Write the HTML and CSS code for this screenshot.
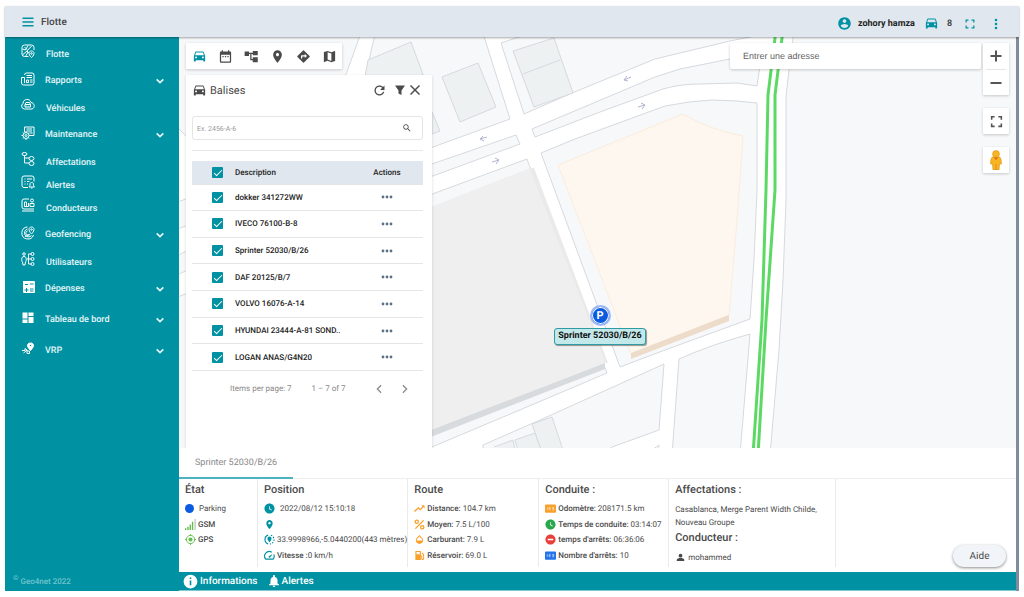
FILE: index.html
```html
<!DOCTYPE html>
<html lang="fr">
<head>
    <meta charset="UTF-8">
    <meta name="viewport" content="width=device-width, initial-scale=1.0">
    <title>Flotte</title>
    <link rel="stylesheet" href="styles.css">
</head>
<body>

    <!-- Shared icons -->
    <svg class="sprite" aria-hidden="true">
        <symbol id="i-menu" viewBox="0 0 24 24"><path d="M1 3h22v3H1zm0 7.500h22v3H1zM1 18h22v3H1z"/></symbol>
        <symbol id="i-car" viewBox="0 0 24 24"><path d="M18.920 5.010C18.720 4.420 18.160 4 17.500 4h-11c-.66 0-1.210.42-1.420 1.010L3 11v8c0 .55.45 1 1 1h1c.55 0 1-.45 1-1v-1h12v1c0 .55.45 1 1 1h1c.55 0 1-.45 1-1v-8l-2.080-5.990zM6.500 15c-.83 0-1.500-.67-1.500-1.500S5.670 12 6.500 12s1.500.67 1.500 1.500S7.330 15 6.500 15zm11 0c-.83 0-1.500-.67-1.500-1.500s.67-1.500 1.500-1.500 1.500.67 1.500 1.500-.67 1.500-1.500 1.500zM5 10l1.500-4.500h11L19 10H5z"/></symbol>
        <symbol id="i-event" viewBox="0 0 24 24"><path d="M19 4h-1V2h-2v2H8V2H6v2H5c-1.100 0-2 .9-2 2v14c0 1.100.9 2 2 2h14c1.100 0 2-.9 2-2V6c0-1.100-.9-2-2-2zm0 16H5V9h14v11zM7 11h2v2H7zm4 0h2v2h-2zm4 0h2v2h-2z"/></symbol>
        <symbol id="i-tree" viewBox="0 0 24 24"><path d="M1 4h7v2h6V3h8v7h-8V8h-2v8h2v-3h8v8h-8v-3h-4V8H8v3H1z"/></symbol>
        <symbol id="i-place" viewBox="0 0 24 24"><path d="M12 2C8.130 2 5 5.130 5 9c0 5.250 7 13 7 13s7-7.750 7-13c0-3.870-3.130-7-7-7zm0 9.500c-1.380 0-2.500-1.120-2.500-2.500s1.120-2.500 2.500-2.500 2.500 1.120 2.500 2.500-1.120 2.500-2.500 2.500z"/></symbol>
        <symbol id="i-directions" viewBox="0 0 24 24"><path d="M21.710 11.290l-9-9a.996.996 0 0 0-1.410 0l-9 9a.996.996 0 0 0 0 1.410l9 9c.39.39 1.020.39 1.410 0l9-9a.996.996 0 0 0 0-1.410zM14 14.500V12h-4v3H8v-4c0-.55.45-1 1-1h5V7.500l3.500 3.500-3.500 3.500z"/></symbol>
        <symbol id="i-map" viewBox="0 0 24 24"><path d="M20.500 3l-.16.030L15 5.100 9 3 3.360 4.900c-.21.070-.36.250-.36.480V20.500c0 .28.220.5.500.5l.16-.030L9 18.900l6 2.100 5.640-1.900c.21-.070.360-.250.360-.480V3.500c0-.28-.22-.5-.5-.5zM15 19l-6-2.110V5l6 2.110V19z"/></symbol>
        <symbol id="i-refresh" viewBox="0 0 24 24"><path d="M17.650 6.350C16.200 4.900 14.210 4 12 4c-4.420 0-7.990 3.580-7.990 8s3.570 8 7.990 8c3.730 0 6.840-2.550 7.730-6h-2.080c-.82 2.330-3.040 4-5.650 4-3.310 0-6-2.690-6-6s2.690-6 6-6c1.660 0 3.140.69 4.220 1.780L13 11h7V4l-2.350 2.350z"/></symbol>
        <symbol id="i-filter" viewBox="0 0 24 24"><path d="M2 3h20l-7 10v9l-6-3v-6z"/></symbol>
        <symbol id="i-close" viewBox="0 0 24 24"><path d="M22 4L20 2l-8 8-8-8-2 2 8 8-8 8 2 2 8-8 8 8 2-2-8-8z"/></symbol>
        <symbol id="i-search" viewBox="0 0 24 24"><path d="M15.500 14h-.79l-.28-.27C15.410 12.590 16 11.110 16 9.500 16 5.910 13.090 3 9.500 3S3 5.910 3 9.500 5.910 16 9.500 16c1.610 0 3.090-.59 4.230-1.570l.27.28v.79l5 4.990L20.490 19l-4.990-5zm-6 0C7.010 14 5 11.990 5 9.500S7.010 5 9.500 5 14 7.010 14 9.500 11.990 14 9.500 14z"/></symbol>
        <symbol id="i-account" viewBox="0 0 24 24"><path d="M12 2C6.480 2 2 6.480 2 12s4.480 10 10 10 10-4.480 10-10S17.520 2 12 2zm0 3c1.660 0 3 1.340 3 3s-1.340 3-3 3-3-1.340-3-3 1.340-3 3-3zm0 14.200c-2.500 0-4.710-1.280-6-3.220.03-1.990 4-3.080 6-3.080 1.990 0 5.970 1.090 6 3.080-1.290 1.940-3.500 3.220-6 3.220z"/></symbol>
        <symbol id="i-full" viewBox="0 0 24 24"><path d="M3 3h6v2.500H5.500V9H3zm12 0h6v6h-2.500V5.500H15zM3 15h2.500v3.500H9V21H3zm15.500 0H21v6h-6v-2.500h3.500z"/></symbol>
        <symbol id="i-more" viewBox="0 0 24 24"><circle cx="12" cy="4" r="2.600"/><circle cx="12" cy="12" r="2.600"/><circle cx="12" cy="20" r="2.600"/></symbol>
        <symbol id="i-dots" viewBox="0 0 24 24"><circle cx="4" cy="12" r="2.800"/><circle cx="12" cy="12" r="2.800"/><circle cx="20" cy="12" r="2.800"/></symbol>
        <symbol id="i-down" viewBox="0 0 24 24"><path d="M4 8l8 8 8-8" fill="none" stroke="currentColor" stroke-width="4"/></symbol>
        <symbol id="i-prev" viewBox="0 0 24 24"><path d="M17 3l-9 9 9 9" fill="none" stroke="currentColor" stroke-width="3"/></symbol>
        <symbol id="i-next" viewBox="0 0 24 24"><path d="M7 3l9 9-9 9" fill="none" stroke="currentColor" stroke-width="3"/></symbol>
        <symbol id="i-clock" viewBox="0 0 24 24"><path d="M12 1C6 1 1 6 1 12s5 11 11 11 11-5 11-11S18 1 12 1zm4.200 15.200L11 13V7h1.500v5.200l4.500 2.700z"/></symbol>
        <symbol id="i-target" viewBox="0 0 24 24"><circle cx="12" cy="12" r="9" fill="none" stroke="currentColor" stroke-width="2"/><circle cx="12" cy="12" r="4.500"/><path d="M11 0h2v4h-2zm0 20h2v4h-2zM0 11h4v2H0zm20 0h4v2h-4z"/></symbol>
        <symbol id="i-coords" viewBox="0 0 24 24"><path d="M9 2.500a10 10 0 0 0 0 19M15 2.500l3 1.500M20 6l1.500 3M22 12l-.5 3M20 18l-2 2M15 21.500h-2" fill="none" stroke="currentColor" stroke-width="2.500"/><path d="M12 5.500c-2.500 0-4.500 2-4.500 4.400 0 3.300 4.500 8.300 4.500 8.300s4.500-5 4.500-8.300c0-2.400-2-4.400-4.500-4.400z"/></symbol>
        <symbol id="i-speed" viewBox="0 0 24 24"><path d="M17 5A10 10 0 0 0 4 20h16a10 10 0 0 0 1.500-10" fill="none" stroke="currentColor" stroke-width="2.500"/><path d="M10.600 16.400a2 2 0 0 1 0-2.800L19 8l-5.600 8.400a2 2 0 0 1-2.800 0z"/></symbol>
        <symbol id="i-trend" viewBox="0 0 24 24"><path d="M16 5l2.500 2.500-5 5-4-4L0 17.500 2 19.500l7.500-7 4 4 7-7L23 12V5z"/></symbol>
        <symbol id="i-percent" viewBox="0 0 24 24"><g fill="none" stroke="currentColor" stroke-width="3"><circle cx="6" cy="6" r="3.500"/><circle cx="18" cy="18" r="3.500"/><path d="M3 21L21 3"/></g></symbol>
        <symbol id="i-drop" viewBox="0 0 24 24"><path d="M17.660 8L12 2.350 6.340 8C4.780 9.560 4 11.640 4 13.640s.78 4.110 2.340 5.670 3.610 2.350 5.660 2.350 4.100-.79 5.660-2.350S20 15.640 20 13.640 19.220 9.560 17.660 8zM6 14c.01-2 .62-3.270 1.760-4.400L12 5.270l4.240 4.380C17.380 10.770 17.990 12 18 14H6z"/></symbol>
        <symbol id="i-gas" viewBox="0 0 24 24"><path d="M3 2h12v10h1c1 0 2 1 2 2v4.500c0 1.300 2 1.300 2 0V11l-3-3V5l5 4v10c0 4-6 4-6 0v-5h-1v8H3zm2.500 2.500v5h7v-5z"/></symbol>
        <symbol id="i-counter" viewBox="0 0 24 24"><rect x="0" y="3" width="24" height="18" rx="2"/><path d="M5 9v6M8.500 9.500h3v2.500h-3v2.500h3.500M15.500 9.500h3.500v5.500h-3.500M16 12h3" fill="none" stroke="#fff" stroke-width="1.300" stroke-opacity=".8"/></symbol>
        <symbol id="i-stop" viewBox="0 0 24 24"><path d="M12 1C6 1 1 6 1 12s5 11 11 11 11-5 11-11S18 1 12 1zm6 12.500H6v-3h12z"/></symbol>
        <symbol id="i-person" viewBox="0 0 24 24"><circle cx="12" cy="7" r="5"/><path d="M2 21v-3c0-3 6-4.500 10-4.500S22 15 22 18v3z"/></symbol>
        <symbol id="i-info" viewBox="0 0 24 24"><path d="M12 1C6 1 1 6 1 12s5 11 11 11 11-5 11-11S18 1 12 1zm1.300 17h-2.600v-7.500h2.600zm0-10h-2.600V5.500h2.600z"/></symbol>
        <symbol id="i-bell" viewBox="0 0 24 24"><path d="M12 24c1.400 0 2.500-1 2.500-2.500h-5C9.500 23 10.600 24 12 24zm7-7v-6c0-3.500-1.800-6.500-5-7.200V2.500C14 1 13 0 12 0s-2 1-2 2.500v1.300C6.800 4.500 5 7.500 5 11v6l-3 2v1.500h20V19z"/></symbol>
        <symbol id="i-gsm" viewBox="0 0 24 24"><path d="M0 20h3v4H0zm5-3h3v7H5zm5-5h3v12h-3zm5-6h3v18h-3z"/><path d="M21 0h2v24h-2z" fill="#aaa"/></symbol>
    </svg>

    <div class="app">
        <header class="topbar">
            <button class="icon-btn" type="button" aria-label="Menu"><svg class="icon"><use href="#i-menu"/></svg></button>
            <h1>Flotte</h1>
            <div class="topbar-user">
                <svg class="icon icon-lg"><use href="#i-account"/></svg>
                <span class="user-name">zohory hamza</span>
                <svg class="icon icon-lg"><use href="#i-car"/></svg>
                <span class="car-count">8</span>
                <button class="icon-btn" type="button" aria-label="Plein écran"><svg class="icon"><use href="#i-full"/></svg></button>
                <button class="icon-btn" type="button" aria-label="Plus"><svg class="icon"><use href="#i-more"/></svg></button>
            </div>
        </header>

        <div class="main">
            <nav class="sidebar">
                <a class="nav-item" href="#">
                    <svg class="nav-icon" viewBox="0 0 28 28"><path d="M15 25H7a5 5 0 0 1-5-5V7a5 5 0 0 1 5-5h14a5 5 0 0 1 5 5v5M3 10l6 2 5-9M4 21l8-7 9-10M12 14l4 4M7 6l5 5M9 25l5-9"/><path d="M21 14c-3 0-5 2-5 5 0 4 5 8 5 8s5-4 5-8c0-3-2-5-5-5z"/><circle cx="21" cy="19" r="1.500"/></svg>
                    <span>Flotte</span>
                </a>
                <a class="nav-group" href="#">
                    <svg class="nav-icon" viewBox="0 0 28 28"><path d="M7 6a4 4 0 0 1 4-4h11a4 4 0 0 1 4 4v16a4 4 0 0 1-4 4H5a4 4 0 0 1-4-4V11h6v11M11 7h11M11 11h11M11 16h4v5h-4zM18 16h5M18 20h5"/></svg>
                    <span>Rapports</span><svg class="chevron"><use href="#i-down"/></svg>
                </a>
                <a class="nav-item" href="#">
                    <svg class="nav-icon" viewBox="0 0 28 28"><path d="M7 22a6 6 0 0 1-3-11C4 1 18 0 20 9c7 0 9 11 2 13zM8 13l2-4h7l2 4v5H8zM8 13h11M11 16h1M15 16h1"/></svg>
                    <span>Véhicules</span>
                </a>
                <a class="nav-group" href="#">
                    <svg class="nav-icon" viewBox="0 0 28 28"><path d="M7 12V2h19v17h-8M11 6h11M11 10h11M17 14h6"/><circle cx="10" cy="19" r="2"/><path d="M10 10v3M10 25v3M1 19h3M16 19h3M4 13l2 2M16 13l-2 2M4 25l2-2M16 25l-2-2"/><circle cx="10" cy="19" r="6"/></svg>
                    <span>Maintenance</span><svg class="chevron"><use href="#i-down"/></svg>
                </a>
                <a class="nav-item" href="#">
                    <svg class="nav-icon" viewBox="0 0 28 28"><ellipse cx="7" cy="4" rx="5" ry="3"/><ellipse cx="21" cy="13" rx="5" ry="4"/><ellipse cx="21" cy="23" rx="5" ry="4"/><path d="M7 7v15h9M7 12h9"/></svg>
                    <span>Affectations</span>
                </a>
                <a class="nav-item" href="#">
                    <svg class="nav-icon" viewBox="0 0 28 28"><path d="M14 25H6a4 4 0 0 1-4-4V6a4 4 0 0 1 4-4h16a4 4 0 0 1 4 4v7M7 8h2M12 8h10M7 13h2M12 13h5M7 18h2M12 18h2"/><path d="M16 24h11l-2-3v-3c0-4-7-4-7 0v3zM20 26h3"/></svg>
                    <span>Alertes</span>
                </a>
                <a class="nav-item" href="#">
                    <svg class="nav-icon" viewBox="0 0 28 28"><path d="M16 2H6a4 4 0 0 0-4 4v12a4 4 0 0 0 4 4h20M2 26h24M7 8v9M11 8v9M15 10v7M7 8h4M7 17h8"/><circle cx="22" cy="5" r="3"/><path d="M18 11h8v6h-8z"/></svg>
                    <span>Conducteurs</span>
                </a>
                <a class="nav-group" href="#">
                    <svg class="nav-icon" viewBox="0 0 28 28"><path d="M13 2a12 12 0 1 0 12 16M13 6a8 8 0 1 0 8 13M13 10a4 4 0 1 0 4 6M8 21l10-4"/><path d="M21 2c-3 0-5 2-5 5 0 4 5 9 5 9s5-5 5-9c0-3-2-5-5-5z"/><circle cx="21" cy="7" r="1.500"/></svg>
                    <span>Geofencing</span><svg class="chevron"><use href="#i-down"/></svg>
                </a>
                <a class="nav-item" href="#">
                    <svg class="nav-icon" viewBox="0 0 28 28"><circle cx="6" cy="4" r="2.500"/><path d="M6 9c-6 0-5 9-3 11l1 6h4l1-6c2-2 3-11-3-11zM20 4h-5v20h5M12 14h8"/><circle cx="23" cy="4" r="3"/><circle cx="23" cy="14" r="3"/><circle cx="23" cy="24" r="3"/></svg>
                    <span>Utilisateurs</span>
                </a>
                <a class="nav-group" href="#">
                    <svg class="nav-icon solid" viewBox="0 0 28 28"><path fill-rule="evenodd" d="M4 2h22a2 2 0 0 1 2 2v20a2 2 0 0 1-2 2H6a2 2 0 0 1-2-2V4zm4 6v2h6V8zm10-1v2h7V7zm0 10v2h7v-2zm0 4v2h7v-2zM10 16v3H7v2h3v3h2v-3h3v-2h-3v-3z"/></svg>
                    <span>Dépenses</span><svg class="chevron"><use href="#i-down"/></svg>
                </a>
                <a class="nav-group" href="#">
                    <svg class="nav-icon solid" viewBox="0 0 28 28"><path d="M3 3h10v12H3zm0 14h10v7H3zM15 3h10v7H15zm0 9h10v12H15z"/></svg>
                    <span>Tableau de bord</span><svg class="chevron"><use href="#i-down"/></svg>
                </a>
                <a class="nav-group" href="#">
                    <svg class="nav-icon" viewBox="0 0 28 28"><path d="M2 17h6v-4l4 3v7h5v-5h-5M5 22l7-6"/><path fill="#fff" fill-rule="evenodd" d="M19 2c-4 0-6 2-6 5 0 4 6 10 6 10s6-6 6-10c0-3-2-5-6-5zm0 3a2 2 0 1 1 0 4 2 2 0 0 1 0-4z"/></svg>
                    <span>VRP</span><svg class="chevron"><use href="#i-down"/></svg>
                </a>
                <p class="copyright"><sup>©</sup> Geo4net 2022</p>
            </nav>

            <div class="content">
                <section class="map">
                    <svg class="map-canvas" viewBox="179 37 837 411" preserveAspectRatio="xMinYMin slice" aria-hidden="true">
                        <rect x="179" y="37" width="837" height="411" fill="#fff"/>
                        <!-- blocks between the roads -->
                        <g fill="#f7f8fa" stroke="#d6d9de">
                            <path d="M170 30H362L344 80 260 210 170 120z"/>
                            <path d="M376 30H482L510 119 433 147 340 185z"/>
                            <path d="M501 43L525 35 760 30 755 36 730 41 655 59 572 93 524 114z"/>
                            <path d="M532 129L535 137 600 112 663 89Q680 84 700 84L737 83 757 86 762 52 730 59 680 69 655 77z"/>
                            <path d="M400 175L516 135 520 144 400 188z"/>
                            <path d="M541 153L575 139 665 106Q690 101 712 100L737 101 757 103V190L754 260 750 319 665 350 620 367z"/>
                            <path d="M400 206L527 159 607 373 515 412 420 452 400 460z"/>
                            <path d="M483 455V445L540 420 664 364 659 430 612 447 600 455z"/>
                            <path d="M679 359Q710 345 750 334L740 455H672z"/>
                            <path d="M645 455L659 445 658 455z"/>
                            <path d="M794 30L789 70 786 97V200L783 280 779 350 770 455H1030V30z"/>
                            <path d="M170 205L188 198V225L170 232zM170 260L188 250V270L170 278zM170 300L188 293V455H170z"/>
                        </g>
                        <g fill="#eef1f2" stroke="#d6dadd">
                            <path d="M368 60L411 42 425 80 360 105z"/>
                            <path d="M442 77L478 63 496 107 460 122z"/>
                            <path d="M513 51L554 38 573 93 534 107zM523 74L560 60"/>
                            <path d="M432 112L440 131 432 134z"/>
                            <path d="M532 424L552 417 563 450 541 450z"/>
                            <path d="M494 447L513 440 515 450M515 440L535 433 541 450H518z"/>
                        </g>
                        <path d="M400 219L530 168 605 363 400 442z" fill="#efefef"/>
                        <path d="M530 168h4L608 363h-3z" fill="#e9eae9"/>
                        <path d="M400 442L605 363V369L400 449z" fill="#d7dbde"/>
                        <path d="M558 165L683 114Q710 130 743 136L737 220 729 315 631 354z" fill="#fef7f0" stroke="#fbecdb"/>
                        <path d="M631 353L729 315V321L631 359z" fill="#ecdcc9"/>
                        <g fill="none" stroke="#5cd964" stroke-width="3">
                            <path d="M776 30L768 95 766 190 762 320 753 455"/>
                            <path d="M783 30L775 95 775 190 766 320 758 455"/>
                        </g>
                        <g fill="none" stroke="#b3b5d2">
                            <path d="M631 77l-7 3m3-4l-3 4 4 1"/>
                            <path d="M638 107l7-2m-4-2l4 2-3 4"/>
                            <path d="M487 137l-7 2m3-3l-3 3 4 2"/>
                            <path d="M492 162l7-2m-4-2l4 2-3 4"/>
                        </g>
                    </svg>

                    <div class="marker">
                        <span class="marker-pin">P</span>
                        <span class="marker-label">Sprinter 52030/B/26</span>
                    </div>

                    <div class="map-overlay">
                        <div class="map-left">
                            <div class="toolbar">
                                <button class="active" type="button" aria-label="Véhicules"><svg class="icon icon-lg"><use href="#i-car"/></svg></button>
                                <button type="button" aria-label="Calendrier"><svg class="icon icon-lg"><use href="#i-event"/></svg></button>
                                <button type="button" aria-label="Groupes"><svg class="icon icon-lg"><use href="#i-tree"/></svg></button>
                                <button type="button" aria-label="Points"><svg class="icon icon-lg"><use href="#i-place"/></svg></button>
                                <button type="button" aria-label="Itinéraire"><svg class="icon icon-lg"><use href="#i-directions"/></svg></button>
                                <button type="button" aria-label="Carte"><svg class="icon icon-lg"><use href="#i-map"/></svg></button>
                            </div>

                            <div class="panel">
                                <div class="panel-head">
                                    <svg class="icon icon-lg"><use href="#i-car"/></svg>
                                    <h2>Balises</h2>
                                    <button class="icon-btn refresh" type="button" aria-label="Actualiser"><svg class="icon icon-lg"><use href="#i-refresh"/></svg></button>
                                    <button class="icon-btn" type="button" aria-label="Filtrer"><svg class="icon"><use href="#i-filter"/></svg></button>
                                    <button class="icon-btn" type="button" aria-label="Fermer"><svg class="icon"><use href="#i-close"/></svg></button>
                                </div>
                                <label class="panel-search">
                                    <input type="text" placeholder="Ex. 2456-A-6" aria-label="Rechercher une balise">
                                    <svg class="icon icon-sm"><use href="#i-search"/></svg>
                                </label>
                                <hr>
                                <table>
                                    <thead>
                                        <tr>
                                            <th class="col-check"><input type="checkbox" aria-label="Tout sélectionner" checked></th>
                                            <th>Description</th>
                                            <th class="col-actions">Actions</th>
                                        </tr>
                                    </thead>
                                    <tbody>
                                        <tr>
                                            <td class="col-check"><input type="checkbox" id="b1" checked></td>
                                            <td><label for="b1">dokker 341272WW</label></td>
                                            <td class="col-actions"><button class="icon-btn" type="button" aria-label="Actions"><svg class="icon"><use href="#i-dots"/></svg></button></td>
                                        </tr>
                                        <tr>
                                            <td class="col-check"><input type="checkbox" id="b2" checked></td>
                                            <td><label for="b2">IVECO 76100-B-8</label></td>
                                            <td class="col-actions"><button class="icon-btn" type="button" aria-label="Actions"><svg class="icon"><use href="#i-dots"/></svg></button></td>
                                        </tr>
                                        <tr>
                                            <td class="col-check"><input type="checkbox" id="b3" checked></td>
                                            <td><label for="b3">Sprinter 52030/B/26</label></td>
                                            <td class="col-actions"><button class="icon-btn" type="button" aria-label="Actions"><svg class="icon"><use href="#i-dots"/></svg></button></td>
                                        </tr>
                                        <tr>
                                            <td class="col-check"><input type="checkbox" id="b4" checked></td>
                                            <td><label for="b4">DAF 20125/B/7</label></td>
                                            <td class="col-actions"><button class="icon-btn" type="button" aria-label="Actions"><svg class="icon"><use href="#i-dots"/></svg></button></td>
                                        </tr>
                                        <tr>
                                            <td class="col-check"><input type="checkbox" id="b5" checked></td>
                                            <td><label for="b5">VOLVO 16076-A-14</label></td>
                                            <td class="col-actions"><button class="icon-btn" type="button" aria-label="Actions"><svg class="icon"><use href="#i-dots"/></svg></button></td>
                                        </tr>
                                        <tr>
                                            <td class="col-check"><input type="checkbox" id="b6" checked></td>
                                            <td><label for="b6">HYUNDAI 23444-A-81 SOND..</label></td>
                                            <td class="col-actions"><button class="icon-btn" type="button" aria-label="Actions"><svg class="icon"><use href="#i-dots"/></svg></button></td>
                                        </tr>
                                        <tr>
                                            <td class="col-check"><input type="checkbox" id="b7" checked></td>
                                            <td><label for="b7">LOGAN ANAS/G4N20</label></td>
                                            <td class="col-actions"><button class="icon-btn" type="button" aria-label="Actions"><svg class="icon"><use href="#i-dots"/></svg></button></td>
                                        </tr>
                                    </tbody>
                                </table>
                                <div class="paginator">
                                    <span>Items per page: 7</span>
                                    <span>1 – 7 of 7</span>
                                    <div class="pages">
                                        <button class="icon-btn" type="button" aria-label="Page précédente"><svg class="icon icon-sm"><use href="#i-prev"/></svg></button>
                                        <button class="icon-btn" type="button" aria-label="Page suivante"><svg class="icon icon-sm"><use href="#i-next"/></svg></button>
                                    </div>
                                </div>
                            </div>
                        </div>

                        <div class="map-right">
                            <input class="address" type="text" placeholder="Entrer une adresse" aria-label="Adresse">
                            <div class="controls">
                                <div class="zoom">
                                    <button type="button" aria-label="Zoom avant"><svg class="icon" viewBox="0 0 24 24"><path d="M10 1h4v9h9v4h-9v9h-4v-9H1v-4h9z"/></svg></button>
                                    <button type="button" aria-label="Zoom arrière"><svg class="icon" viewBox="0 0 24 24"><path d="M1 10h22v4H1z"/></svg></button>
                                </div>
                                <button class="control" type="button" aria-label="Plein écran"><svg class="icon icon-lg"><use href="#i-full"/></svg></button>
                                <button class="control" type="button" aria-label="Street View">
                                    <svg class="pegman" viewBox="0 0 12 20"><path d="M3 7h6c2 0 2 2 2.500 7H9.500L9 20H3l-.5-6H.5C1 9 1 7 3 7z" fill="#f9b421" stroke="#d98e1c" stroke-width=".6"/><circle cx="6" cy="4" r="3.400" fill="#f9b421" stroke="#d98e1c" stroke-width=".6"/><path d="M4 7.500h4L6 10z" fill="#e0621d"/><path d="M6 14v6" stroke="#d98e1c"/></svg>
                                </button>
                            </div>
                        </div>
                    </div>
                </section>

                <section class="details">
                    <div class="tabs">
                        <a class="tab" href="#">Sprinter 52030/B/26</a>
                    </div>
                    <div class="info-grid">
                        <div class="info">
                            <h3>État</h3>
                            <ul>
                                <li><span class="dot"></span><span class="wide">Parking</span></li>
                                <li><svg class="icon green"><use href="#i-gsm"/></svg><b>GSM</b></li>
                                <li><svg class="icon green"><use href="#i-target"/></svg><b>GPS</b></li>
                            </ul>
                        </div>
                        <div class="info">
                            <h3>Position</h3>
                            <ul>
                                <li><svg class="icon teal"><use href="#i-clock"/></svg><span class="wide">2022/08/12 15:10:18</span></li>
                                <li><svg class="icon teal"><use href="#i-place"/></svg></li>
                                <li><svg class="icon teal"><use href="#i-coords"/></svg><span>33.9998966,-5.0440200(443 mètres)</span></li>
                                <li><svg class="icon teal"><use href="#i-speed"/></svg><span><b>Vitesse :</b>0 km/h</span></li>
                            </ul>
                        </div>
                        <div class="info">
                            <h3>Route</h3>
                            <ul>
                                <li><svg class="icon orange"><use href="#i-trend"/></svg><span><b>Distance:</b> 104.7 km</span></li>
                                <li><svg class="icon orange"><use href="#i-percent"/></svg><span><b>Moyen:</b> 7.5 L/100</span></li>
                                <li><svg class="icon orange"><use href="#i-drop"/></svg><span><b>Carburant:</b> 7.9 L</span></li>
                                <li><svg class="icon orange"><use href="#i-gas"/></svg><span><b>Réservoir:</b> 69.0 L</span></li>
                            </ul>
                        </div>
                        <div class="info">
                            <h3>Conduite :</h3>
                            <ul>
                                <li><svg class="icon orange"><use href="#i-counter"/></svg><span><b>Odomètre:</b> 208171.5 km</span></li>
                                <li><svg class="icon darkgreen"><use href="#i-clock"/></svg><span><b>Temps de conduite:</b> 03:14:07</span></li>
                                <li><svg class="icon red"><use href="#i-stop"/></svg><span><b>temps d'arrêts:</b> 06:36:06</span></li>
                                <li><svg class="icon blue"><use href="#i-counter"/></svg><span><b>Nombre d'arrêts:</b> 10</span></li>
                            </ul>
                        </div>
                        <div class="info">
                            <h3>Affectations :</h3>
                            <p>Casablanca, Merge Parent Width Childe, Nouveau Groupe</p>
                            <h3>Conducteur :</h3>
                            <p class="driver"><svg class="icon"><use href="#i-person"/></svg>mohammed</p>
                        </div>
                        <div class="info help">
                            <button class="help-btn" type="button">Aide</button>
                        </div>
                    </div>
                </section>

                <footer class="bottombar">
                    <a href="#"><svg class="icon icon-lg"><use href="#i-info"/></svg>Informations</a>
                    <a href="#"><svg class="icon"><use href="#i-bell"/></svg>Alertes</a>
                </footer>
            </div>
        </div>
    </div>

</body>
</html>
```

FILE: styles.css
```css
* {
    box-sizing: border-box;
}
body {
    margin: 0;
    padding: 6px 5px;
    background-color: #fff;
    font-family: Roboto, "Liberation Sans", sans-serif;
    font-size: 8px;
    color: #4a4a4a;
    text-rendering: geometricPrecision;
}
h1, h2, h3, p, ul {
    margin: 0;
    padding: 0;
    font-weight: 500;
}
a {
    color: inherit;
    text-decoration: none;
}
button, input {
    font: inherit;
    color: inherit;
    text-rendering: inherit;
}
button {
    display: flex;
    align-items: center;
    justify-content: center;
    padding: 0;
    border: none;
    background: none;
    cursor: pointer;
}
.sprite {
    position: absolute;
    width: 0;
    height: 0;
}
.icon {
    width: 12px;
    height: 12px;
    flex: none;
    fill: currentColor;
}
.icon-sm {
    width: 10px;
    height: 10px;
}
.icon-lg {
    width: 15px;
    height: 15px;
}
.app {
    display: flex;
    flex-direction: column;
    min-height: calc(100vh - 12px);
}

/* Top bar */
.topbar {
    position: relative;
    z-index: 2;
    display: flex;
    align-items: center;
    gap: 7px;
    height: 31px;
    padding: 1px 17px 0;
    background-color: #e0e7ee;
    box-shadow: 0 1px 2px rgba(0, 0, 0, 0.35);
    color: #0092a3;
}
.topbar h1 {
    font-size: 10px;
    color: #444;
}
.topbar-user {
    display: flex;
    align-items: center;
    gap: 6px;
    margin-left: auto;
    padding-top: 3px;
}
.user-name {
    margin-right: 3px;
    font-size: 9px;
    font-weight: 700;
    color: #222;
}
.car-count {
    margin: 0 6px 0 2px;
    font-size: 9px;
    font-weight: 500;
    color: #333;
}
.topbar-user .icon-btn + .icon-btn {
    margin-left: 8px;
}

.main {
    display: flex;
    flex: 1;
}

/* Sidebar */
.sidebar {
    display: flex;
    flex-direction: column;
    width: 174px;
    flex: none;
    padding: 5px 14px 5px 16px;
    background-color: #0092a3;
    color: #e4f5f7;
    font-size: 9px;
    font-weight: 500;
}
.nav-item, .nav-group {
    display: flex;
    gap: 10px;
}
.nav-item {
    height: 23px;
    padding-top: 2px;
}
.nav-item span {
    padding: 6px 0 0 1px;
}
.nav-group {
    height: 31px;
    align-items: center;
}
.nav-icon {
    width: 14px;
    height: 14px;
    flex: none;
    fill: none;
    stroke: #fff;
    stroke-width: 2;
}
.nav-group .nav-icon {
    margin-bottom: 4px;
}
.nav-icon.solid {
    fill: #fff;
    stroke: none;
}
.chevron {
    width: 10px;
    height: 10px;
    margin-left: auto;
}
.copyright {
    margin-top: auto;
    margin-left: -8px;
    font-size: 8px;
    color: #6fc4ce;
}
.copyright sup {
    font-size: 7px;
}

/* Map */
.content {
    display: flex;
    flex-direction: column;
    flex: 1;
    min-width: 0;
    border-right: 3px solid #7f8c9b;
}
.map {
    position: relative;
    flex: 1;
    overflow: hidden;
}
.map-canvas {
    position: absolute;
    width: 100%;
    height: 100%;
}
.map-overlay {
    position: relative;
    display: flex;
    justify-content: space-between;
    height: 100%;
    padding: 6px 7px 0;
}
.map-left {
    display: flex;
    flex-direction: column;
    gap: 6px;
    width: 246px;
}
.toolbar {
    display: flex;
    align-self: flex-start;
    height: 26px;
    background-color: #fff;
    box-shadow: 0 1px 3px rgba(0, 0, 0, 0.2);
}
.toolbar button {
    width: 26px;
}
.toolbar .active {
    color: #0092a3;
}
.panel {
    flex: 1;
    padding: 0 9px 0 6px;
    background-color: #fff;
    box-shadow: 0 1px 3px rgba(0, 0, 0, 0.15);
}
.panel-head {
    display: flex;
    align-items: center;
    gap: 3px;
    height: 30px;
    padding-right: 2px;
}
.panel-head h2 {
    font-size: 11px;
    font-weight: 400;
}
.refresh {
    margin-left: auto;
    margin-right: 4px;
}
.panel-search {
    display: flex;
    align-items: center;
    height: 24px;
    margin-top: 11px;
    padding: 0 10px 0 4px;
    border: 1px solid #e5e5e5;
    border-radius: 3px;
}
.panel-search input {
    flex: 1;
    min-width: 0;
    padding: 2px 0 0;
    border: none;
    outline: none;
    background: none;
    font-size: 7px;
}
.panel-search input::placeholder {
    color: #999;
}
hr {
    margin: 10px 0;
    border: none;
    border-top: 1px solid #e8e8e8;
}
table {
    width: 100%;
    height: 210px;
    border-collapse: collapse;
    font-weight: 500;
    color: #222;
}
th, td {
    padding: 0;
    border-bottom: 1px solid #e3e5e7;
    text-align: left;
    font-weight: 500;
}
th {
    height: 23px;
    background-color: #e0e7ee;
}
td {
    height: 26px;
}
.col-check {
    width: 43px;
    padding-left: 20px;
}
.col-actions {
    width: 72px;
    text-align: center;
}
.col-actions button {
    margin: 0 auto;
    color: #5d7186;
}
input[type="checkbox"] {
    display: block;
    position: relative;
    width: 11px;
    height: 11px;
    margin: 0;
    appearance: none;
    border-radius: 1px;
    background-color: #0092a3;
}
input[type="checkbox"]:checked::after {
    content: "";
    position: absolute;
    left: 4px;
    top: 1px;
    width: 3px;
    height: 7px;
    border: solid #fff;
    border-width: 0 1px 1px 0;
    transform: rotate(45deg);
}
.paginator {
    display: flex;
    align-items: center;
    gap: 20px;
    height: 35px;
    padding: 0 13px 0 38px;
    color: #888;
}
.pages {
    display: flex;
    gap: 16px;
    margin-left: auto;
}
.map-right {
    display: flex;
    align-items: flex-start;
    gap: 2px;
}
.address {
    width: 251px;
    height: 26px;
    padding: 0 13px;
    border: none;
    border-radius: 2px;
    background-color: #fff;
    box-shadow: 0 1px 3px rgba(0, 0, 0, 0.2);
    font-family: "Liberation Sans", sans-serif;
    font-size: 9px;
}
.address::placeholder {
    color: #666;
}
.controls {
    display: flex;
    flex-direction: column;
    gap: 13px;
    width: 26px;
    color: #555;
}
.zoom, .control {
    width: 26px;
    background-color: #fff;
    border-radius: 1px;
    box-shadow: 0 1px 3px rgba(0, 0, 0, 0.2);
}
.zoom {
    padding: 0 3px;
}
.zoom button {
    width: 20px;
    height: 26px;
}
.zoom button + button {
    border-top: 1px solid #e6e6e6;
}
.control {
    height: 26px;
}
.pegman {
    width: 12px;
    height: 20px;
}

/* Vehicle placed on the map */
.marker {
    position: absolute;
    left: 375px;
    top: 268px;
    display: flex;
    flex-direction: column;
    align-items: center;
    gap: 2px;
    width: 92px;
}
.marker-pin {
    width: 21px;
    height: 21px;
    border: 2px solid #9db8f2;
    border-radius: 50%;
    background-color: #0b5be0;
    box-shadow: inset 0 0 0 1px #fff;
    color: #fff;
    font-size: 11px;
    font-weight: 700;
    line-height: 17px;
    text-align: center;
}
.marker-label {
    width: 92px;
    height: 17px;
    border: 1px solid #2f9ba5;
    border-radius: 3px;
    background-color: #c3e8ea;
    box-shadow: 1px 1px 1px rgba(0, 0, 0, 0.4);
    color: #111;
    font-size: 9px;
    font-weight: 700;
    line-height: 15px;
    text-align: center;
    white-space: nowrap;
}

/* Details under the map */
.details {
    background-color: #fff;
}
.tabs {
    display: flex;
    height: 31px;
    border-bottom: 1px solid #eee;
}
.tab {
    display: flex;
    align-items: center;
    height: 31px;
    padding: 0 16px;
    border-bottom: 2px solid #4db3be;
    font-size: 9px;
    color: #888;
}
.info-grid {
    display: grid;
    grid-template-columns: 79fr 150fr 131fr 130fr 167fr 180fr;
    height: 93px;
    padding-bottom: 5px;
}
.info {
    padding: 3px 0 0 6px;
    border-right: 1px solid #eaeaea;
    white-space: nowrap;
}
.info:last-child {
    border-right: none;
}
.info h3 {
    font-size: 11px;
    line-height: 15px;
}
.info ul {
    display: grid;
    grid-template-rows: repeat(4, 1fr);
    height: 62px;
    margin-top: 4px;
    list-style: none;
    font-weight: 400;
}
.info li {
    display: flex;
    align-items: center;
    gap: 2px;
}
.info li .icon {
    width: 11px;
    height: 11px;
}
.info b {
    font-weight: 500;
}
.dot {
    width: 9px;
    height: 9px;
    border-radius: 50%;
    background-color: #0b5be0;
}
.wide {
    padding-left: 3px;
}
.info p {
    margin-top: 6px;
    padding-bottom: 1px;
    line-height: 13px;
    font-weight: 400;
    white-space: normal;
}
.info .driver {
    display: flex;
    align-items: center;
    gap: 2px;
}
.driver .icon {
    width: 11px;
    height: 9px;
}
.green {
    color: #62bd4a;
}
.teal {
    color: #0092a3;
}
.orange {
    color: #f9a02b;
}
.darkgreen {
    color: #27a84a;
}
.red {
    color: #e8403a;
}
.blue {
    color: #2374e8;
}
.help {
    display: flex;
    align-items: flex-end;
    justify-content: flex-end;
    padding-right: 10px;
}
.help-btn {
    width: 53px;
    height: 22px;
    border-radius: 11px;
    background-color: #f1f4f8;
    box-shadow: 0 1px 3px rgba(0, 0, 0, 0.45);
    font-size: 10px;
}
.bottombar {
    display: flex;
    align-items: center;
    gap: 10px;
    height: 19px;
    padding: 0 4px;
    border-bottom: 1px solid #7fc8d0;
    background-color: #0092a3;
    color: #fff;
    font-size: 10px;
    font-weight: 500;
}
.bottombar a {
    display: flex;
    align-items: center;
    gap: 2px;
}
```
